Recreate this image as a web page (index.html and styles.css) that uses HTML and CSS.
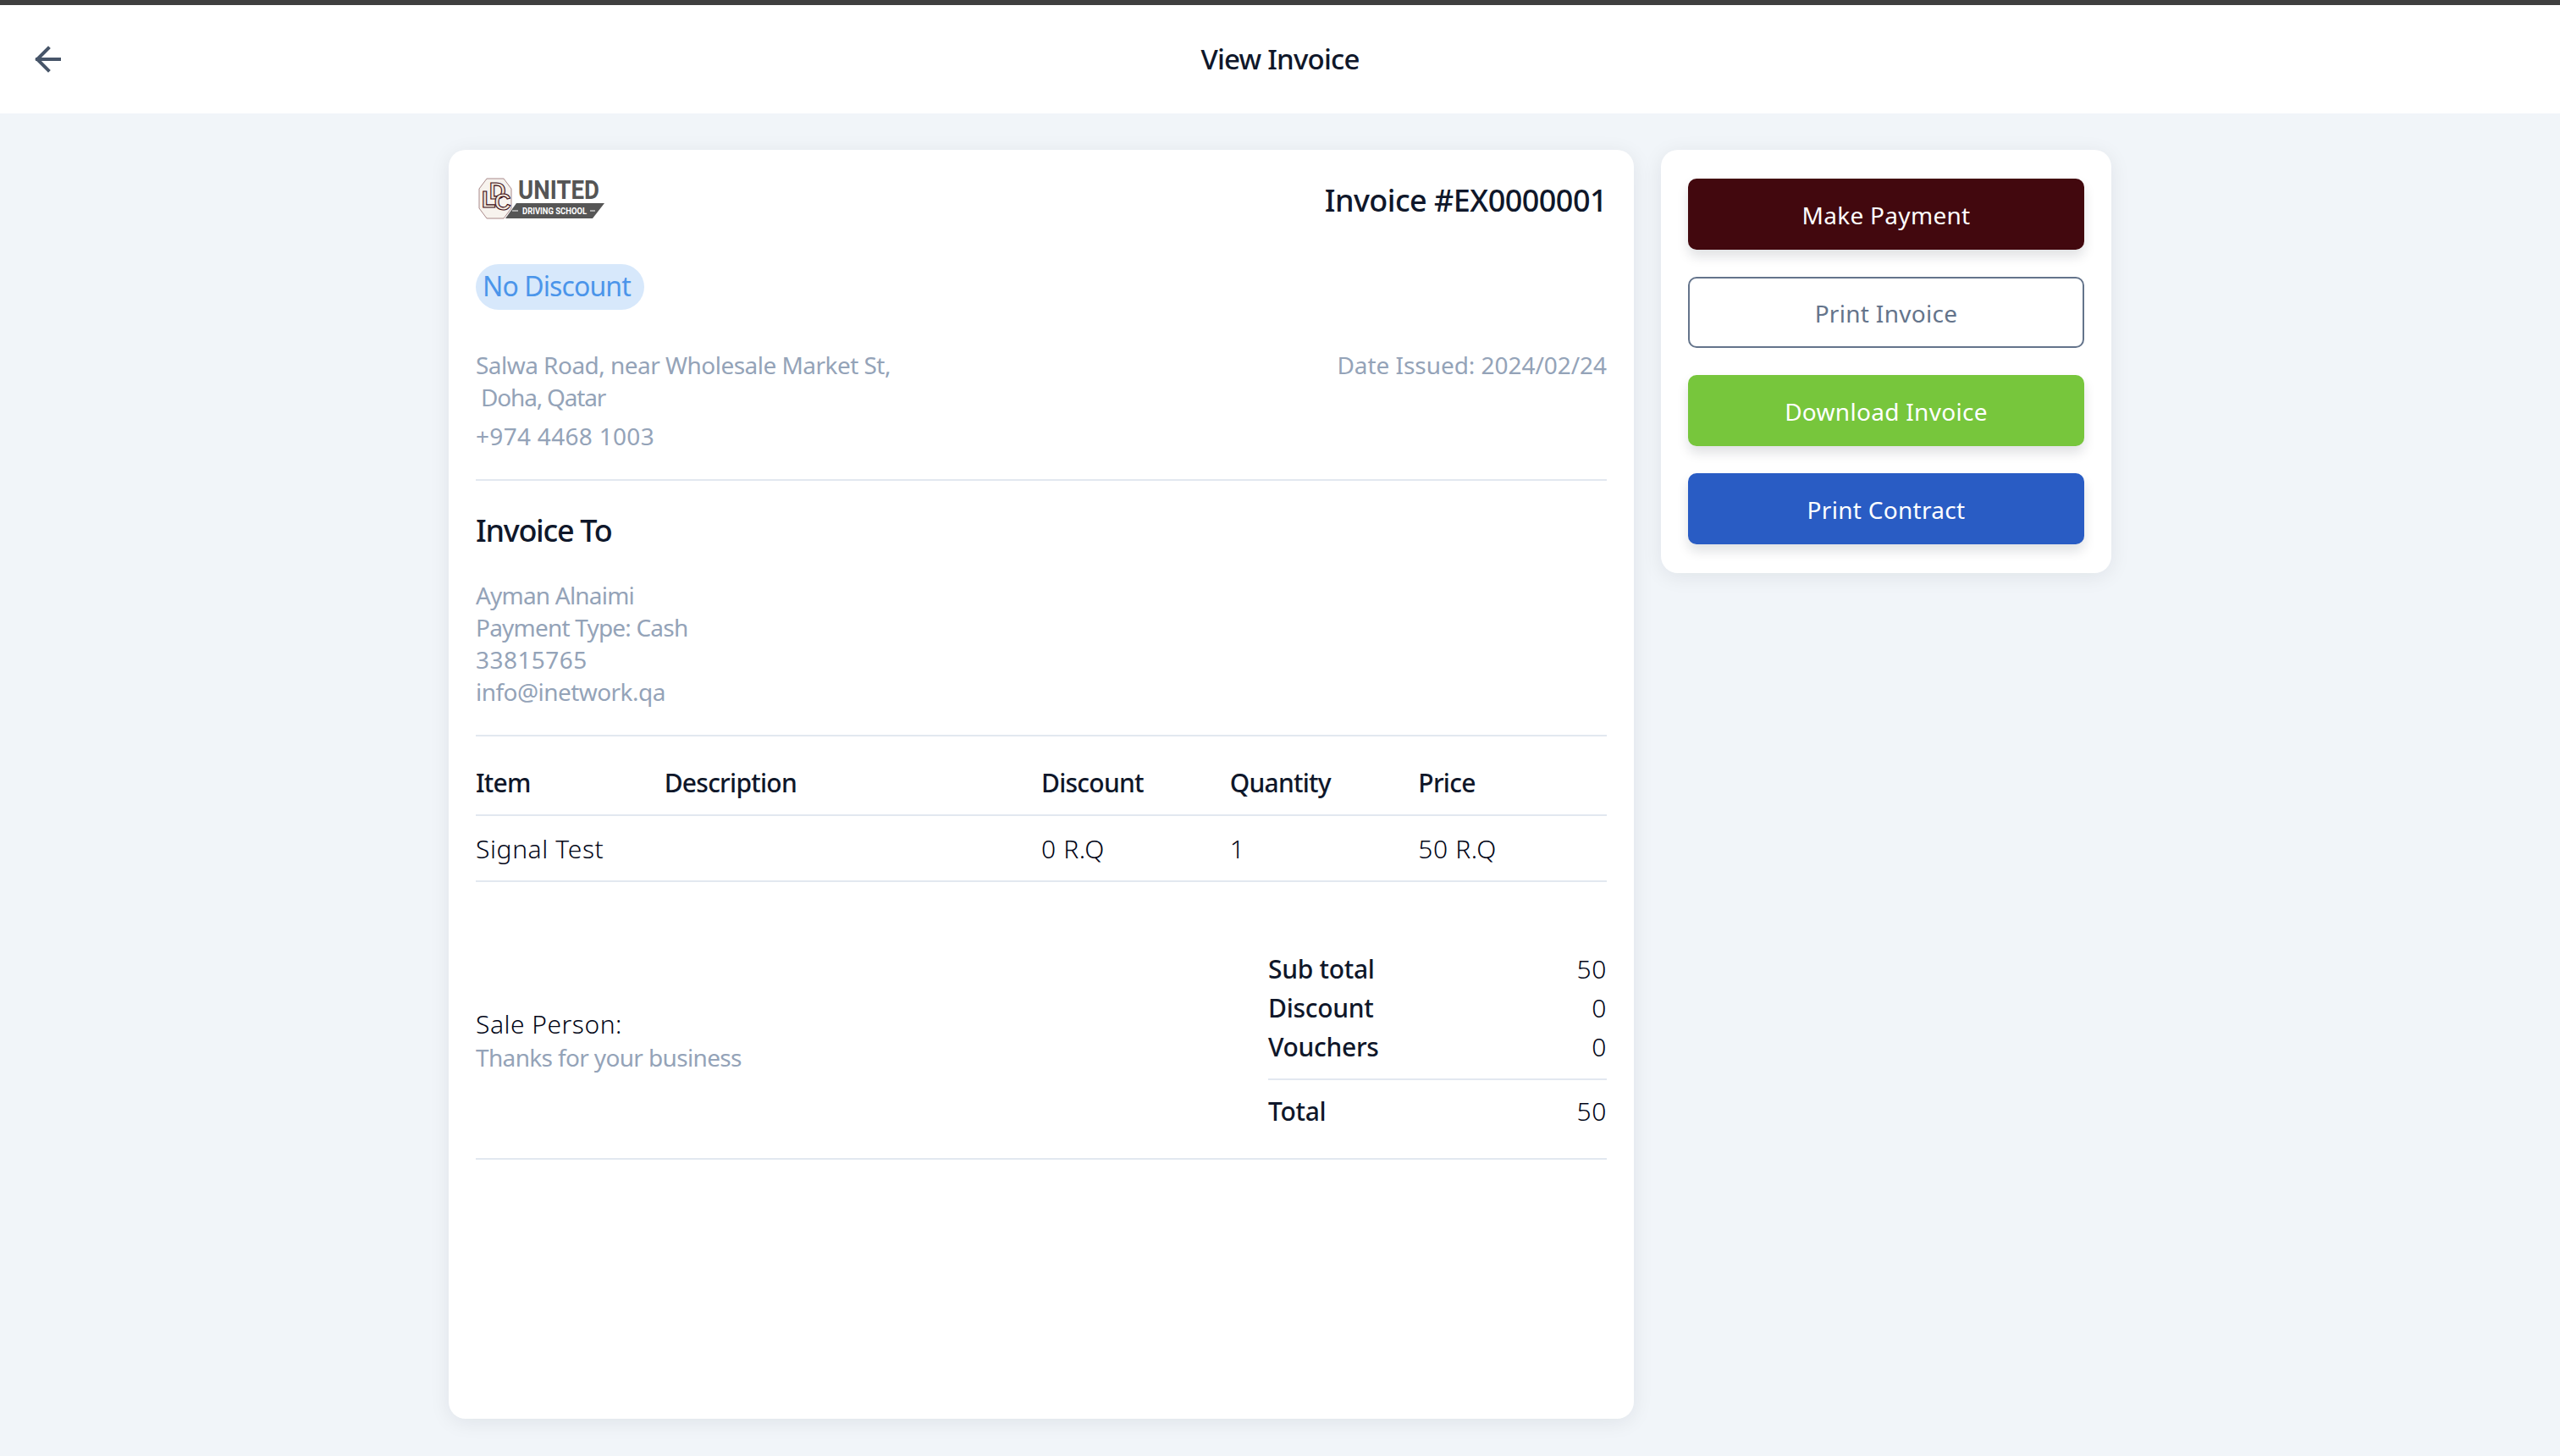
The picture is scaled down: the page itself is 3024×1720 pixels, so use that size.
FILE: index.html
```html
<!DOCTYPE html>
<html lang="en">
<head>
<meta charset="utf-8">
<title>View Invoice</title>
<link rel="stylesheet" href="styles.css">
</head>
<body>
<header class="topbar">
  <button class="back" aria-label="Back">
    <svg width="40" height="40" viewBox="0 0 40 40" fill="none" stroke="#475569" stroke-width="4" stroke-linecap="square"><path d="M33 20H7M20 7 7 20l13 13"/></svg>
  </button>
  <h1 class="title">View Invoice</h1>
</header>
<main class="page">
  <section class="card invoice">
    <div class="row-between head">
      <svg class="logo" width="154" height="52" viewBox="0 0 154 52">
        <path d="M11 2h20l9 12v23l-9 12H11L2 37V14z" fill="#f7f3ee" stroke="#a98a8a" stroke-width="1"/>
        <text class="mono" x="5 14 20" y="36 26 39">LDC</text>
        <text x="48" y="26" class="logo-main" textLength="96" lengthAdjust="spacingAndGlyphs">UNITED</text>
        <path d="M46 31h104l-14 18H33z" fill="#565656"/>
        <path d="M41 40h7M133 40h6" stroke="#fff" stroke-width="1.2"/>
        <text x="53" y="44" class="logo-sub" textLength="76" lengthAdjust="spacingAndGlyphs">DRIVING SCHOOL</text>
      </svg>
      <h2 class="inv-no">Invoice #EX0000001</h2>
    </div>
    <span class="badge">No Discount</span>
    <div class="row-between addr">
      <div class="muted">
        <p>Salwa Road, near Wholesale Market St,</p>
        <p class="city">&nbsp;Doha, Qatar</p>
        <p class="phone">+974 4468 1003</p>
      </div>
      <p class="muted date">Date Issued: 2024/02/24</p>
    </div>
    <hr class="rule">
    <h3 class="to">Invoice To</h3>
    <div class="muted client">
      <p>Ayman Alnaimi</p>
      <p>Payment Type: Cash</p>
      <p class="digits">33815765</p>
      <p class="email">info@inetwork.qa</p>
    </div>
    <hr class="rule">
    <div class="grid thead">
      <span>Item</span><span class="wide">Description</span><span>Discount</span><span>Quantity</span><span>Price</span>
    </div>
    <div class="grid tbody">
      <span>Signal Test</span><span class="wide"></span><span>0 R.Q</span><span>1</span><span>50 R.Q</span>
    </div>
    <div class="summary">
      <div class="sale">
        <p class="person">Sale Person:</p>
        <p class="muted thanks">Thanks for your business</p>
      </div>
      <div class="totals">
        <div class="line"><b>Sub total</b><span>50</span></div>
        <div class="line"><b>Discount</b><span>0</span></div>
        <div class="line"><b>Vouchers</b><span>0</span></div>
        <hr class="rule total-rule">
        <div class="line"><b>Total</b><span>50</span></div>
      </div>
    </div>
    <hr class="rule">
  </section>
  <aside class="card actions">
    <button class="btn maroon">Make Payment</button>
    <button class="btn outline">Print Invoice</button>
    <button class="btn green">Download Invoice</button>
    <button class="btn blue">Print Contract</button>
  </aside>
</main>
</body>
</html>
```
FILE: styles.css
```css
* { box-sizing: border-box; }
html, body { margin: 0; height: 100%; }
body {
  background: #f1f5f9;
  font-family: "Noto Sans", "Open Sans", sans-serif;
  color: #0f172a;
  font-size: 28px;
  overflow: hidden;
  border-top: 6px solid #3f3f3f;
}
p, h1, h2, h3 { margin: 0; font-weight: 400; }
.topbar {
  height: 128px;
  padding-bottom: 2px;
  background: #fff;
  display: flex;
  align-items: center;
  justify-content: center;
  position: relative;
}
.back {
  position: absolute;
  left: 37px;
  top: 44px;
  padding: 0;
  border: 0;
  background: none;
  line-height: 0;
}
.title { font-size: 33px; font-weight: 500; letter-spacing: -.8px; }
.page {
  display: flex;
  align-items: flex-start;
  justify-content: center;
  gap: 32px;
  padding-top: 43px;
}
.card {
  background: #fff;
  border-radius: 20px;
  box-shadow: 0 4px 24px rgba(15, 23, 42, .08);
}
.invoice { width: 1400px; height: 1499px; padding: 32px; display: flex; flex-direction: column; }
.row-between { display: flex; justify-content: space-between; }
.head { align-items: flex-start; height: 103px; }
.logo { overflow: visible; margin-left: 2px; }
.mono { font: 700 27px "Liberation Sans", sans-serif; fill: #efe6da; stroke: #3b0a10; stroke-width: 1.1; }
.logo-main { font: 700 31px "Roboto", sans-serif; fill: #555; }
.logo-sub { font: 700 11px "Roboto", sans-serif; fill: #fff; }
.inv-no { font-size: 36px; font-weight: 500; letter-spacing: -.55px; margin-top: 3px; }
.badge {
  align-self: flex-start;
  background: #d7e8fb;
  color: #4b95ea;
  border-radius: 27px;
  height: 54px;
  line-height: 52px;
  padding: 0 16px 0 8px;
  font-size: 32px;
  letter-spacing: -.9px;
}
.muted { color: #94a3b8; font-size: 28px; letter-spacing: -.53px; line-height: 38px; }
.addr { margin-top: 46px; }
.city { letter-spacing: -1.2px; }
.phone { margin-top: 8px; letter-spacing: .3px; }
.date { letter-spacing: -.05px; }
.rule { width: 100%; border: 0; border-top: 2px solid #e2e8f0; margin: 32px 0 0; }
.to { font-size: 36px; font-weight: 500; letter-spacing: -1.3px; margin-top: 35px; line-height: 48px; }
.client { margin-top: 33px; letter-spacing: -.8px; }
.digits { letter-spacing: .45px; }
.email { letter-spacing: -.55px; }
.grid { display: grid; grid-template-columns: repeat(6, 1fr); align-items: center; letter-spacing: -.75px; font-size: 30px; }
.wide { grid-column: span 2; }
.thead { height: 94px; font-weight: 500; border-bottom: 2px solid #e2e8f0; padding-top: 17px; }
.tbody { height: 78px; font-weight: 300; letter-spacing: .6px; border-bottom: 2px solid #e2e8f0; color: #020617; }
.summary { display: flex; justify-content: space-between; align-items: center; margin-top: 80px; }
.person { font-size: 30px; font-weight: 300; letter-spacing: .5px; line-height: 40px; color: #020617; }
.thanks { letter-spacing: -.65px; }
.totals { width: 400px; }
.line { display: flex; justify-content: space-between; font-size: 30px; line-height: 46px; letter-spacing: -.3px; }
.line span { letter-spacing: .6px; font-weight: 300; color: #020617; }
.line b { font-weight: 500; }
.total-rule { margin: 14px 0 14px; }
.actions { width: 532px; padding: 34px 32px; display: flex; flex-direction: column; gap: 32px; }
.btn {
  height: 84px;
  width: 100%;
  border: 0;
  border-radius: 10px;
  padding: 2px 0 0;
  font: 400 28px "Noto Sans", sans-serif;
  letter-spacing: .3px;
  color: #fff;
  box-shadow: 0 8px 14px rgba(15, 23, 42, .13);
}
.maroon { background: #42080e; }
.outline { background: #fff; color: #64748b; border: 2px solid #64748b; box-shadow: none; }
.green { background: #77c63c; }
.blue { background: #295cc4; }
```
